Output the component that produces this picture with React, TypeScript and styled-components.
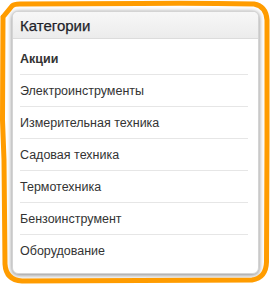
import React from 'react';
import styled, { createGlobalStyle } from 'styled-components';

const GlobalStyle = createGlobalStyle`
  html, body {
    margin: 0;
    padding: 0;
    background: #fff;
  }
  body {
    font-family: 'Liberation Sans', Arial, sans-serif;
    color: #333;
  }
`;

const Stage = styled.div`
  position: relative;
  width: 271px;
  height: 287px;
  padding: 11px 0 0 12px;
  box-sizing: border-box;
  background: #fff;
  overflow: hidden;
`;

const Panel = styled.div`
  width: 247px;
  height: 263px;
  box-sizing: border-box;
  border: 1px solid #d4d4d4;
  border-radius: 6px;
  background: #fff;
  box-shadow: 0 1px 5px rgba(0, 0, 0, 0.5);
  overflow: hidden;
`;

const Header = styled.div`
  height: 26px;
  display: flex;
  align-items: center;
  padding: 0 7px;
  background: linear-gradient(#f7f7f7, #ececec);
  border-bottom: 1px solid #dcdcdc;
  font-size: 15px;
  color: #1f1f2a;
  -webkit-text-stroke: 0.25px #1f1f2a;
`;

const List = styled.ul`
  list-style: none;
  margin: 0 10px 0 7px;
  padding: 4px 0 0;
`;

const Item = styled.li<{ $bold?: boolean; $last?: boolean }>`
  height: 30px;
  padding-top: 1px;
  display: flex;
  align-items: center;
  font-size: 12.5px;
  font-weight: ${(p) => (p.$bold ? 'bold' : 'normal')};
  color: #333;
  border-bottom: 1px solid ${(p) => (p.$last ? 'transparent' : '#e6e6e6')};
`;

const Scribble = styled.svg`
  position: absolute;
  left: 0;
  top: 0;
  pointer-events: none;
`;

const categories = [
  'Акции',
  'Электроинструменты',
  'Измерительная техника',
  'Садовая техника',
  'Термотехника',
  'Бензоинструмент',
  'Оборудование'
];

export default function App() {
  return (
    <>
      <GlobalStyle />
      <Stage>
        <Panel>
          <Header>Категории</Header>
          <List>
            {categories.map((c, i) => (
              <Item key={c} $bold={i === 0} $last={i === categories.length - 1}>
                {c}
              </Item>
            ))}
          </List>
        </Panel>
        <Scribble width="271" height="287" viewBox="0 0 271 287">
          <path
            d="M3 17 L12 6 Q14 4 20 4 L140 3.5 Q200 3 254 4 Q266 6 267 20 L267 140 L266.5 262 Q266 278 252 280 L140 280.5 L22 281 Q6 280 5 264 L4 160 L2.5 120 L3 17"
            fill="none"
            stroke="#ff9c00"
            strokeWidth="5"
            strokeLinejoin="round"
            strokeLinecap="round"
          />
        </Scribble>
      </Stage>
    </>
  );
}
